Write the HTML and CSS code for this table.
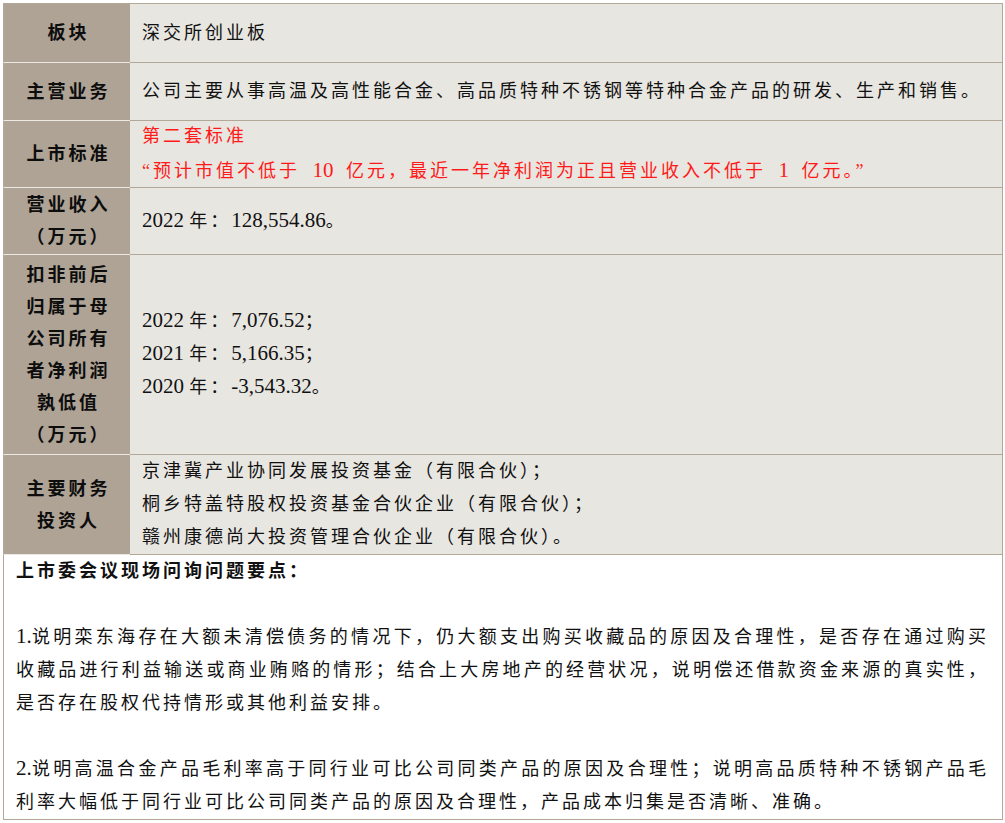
FILE: index.html
```html
<!DOCTYPE html>
<html lang="zh-CN">
<head>
<meta charset="utf-8">
<title>深交所创业板</title>
<link rel="stylesheet" href="styles.css">
</head>
<body>
<div class="sheet">
  <div class="grid">
    <div class="label">板块</div>
    <div class="value">深交所创业板</div>

    <div class="label">主营业务</div>
    <div class="value">公司主要从事高温及高性能合金、高品质特种不锈钢等特种合金产品的研发、生产和销售。</div>

    <div class="label">上市标准</div>
    <div class="value red">
      <div class="line">第二套标准</div>
      <div class="line">“预计市值不低于 <span class="n">10</span> 亿元，最近一年净利润为正且营业收入不低于 <span class="n">1</span> 亿元。”</div>
    </div>

    <div class="label">营业收入<br>（万元）</div>
    <div class="value"><div class="line"><span class="n">2022 </span>年：<span class="n">128,554.86</span>。</div></div>

    <div class="label">扣非前后<br>归属于母<br>公司所有<br>者净利润<br>孰低值<br>（万元）</div>
    <div class="value">
      <div class="line"><span class="n">2022 </span>年：<span class="n">7,076.52</span>；</div>
      <div class="line"><span class="n">2021 </span>年：<span class="n">5,166.35</span>；</div>
      <div class="line"><span class="n">2020 </span>年：<span class="n">-3,543.32</span>。</div>
    </div>

    <div class="label">主要财务<br>投资人</div>
    <div class="value">
      <div class="line">京津冀产业协同发展投资基金（有限合伙）；</div>
      <div class="line">桐乡特盖特股权投资基金合伙企业（有限合伙）；</div>
      <div class="line">赣州康德尚大投资管理合伙企业（有限合伙）。</div>
    </div>
  </div>

  <div class="notes">
    <div class="heading">上市委会议现场问询问题要点：</div>
    <div class="blank"></div>
    <div class="para">
      <span class="ln full"><span class="n">1.</span>说明栾东海存在大额未清偿债务的情况下，仍大额支出购买收藏品的原因及合理性，是否存在通过购买</span>
      <span class="ln full">收藏品进行利益输送或商业贿赂的情形；结合上大房地产的经营状况，说明偿还借款资金来源的真实性，</span>
      <span class="ln">是否存在股权代持情形或其他利益安排。</span>
    </div>
    <div class="blank"></div>
    <div class="para">
      <span class="ln full"><span class="n">2.</span>说明高温合金产品毛利率高于同行业可比公司同类产品的原因及合理性；说明高品质特种不锈钢产品毛</span>
      <span class="ln">利率大幅低于同行业可比公司同类产品的原因及合理性，产品成本归集是否清晰、准确。</span>
    </div>
  </div>
</div>
</body>
</html>
```

FILE: styles.css
```css
html, body {
  margin: 0;
  padding: 0;
  background: #ffffff;
}

body {
  font-family: "Liberation Serif", "Noto Sans CJK SC", serif;
  font-size: 18px;
  letter-spacing: 3px;
  color: #111111;
}

.sheet {
  margin: 3px 0 0 3px;
  width: 1000px;
  box-sizing: border-box;
}

.grid {
  display: grid;
  grid-template-columns: 127px 873px;
  grid-template-rows: 59px 58px 67px 67px 200px 100px;
  border-top: 1px solid #b3a797;
}

.label {
  box-sizing: border-box;
  background: #aea395;
  border-left: 1px solid #b3a797;
  border-bottom: 1px solid #ece9e4;
  display: flex;
  align-items: center;
  justify-content: center;
  text-align: center;
  font-weight: 700;
  line-height: 32px;
  padding-left: 3px;
  color: #0d0d0d;
}

.value {
  box-sizing: border-box;
  background: #e8e6e1;
  border-bottom: 1px solid #b3a797;
  border-right: 1px solid #b3a797;
  display: flex;
  flex-direction: column;
  justify-content: center;
  padding-left: 12px;
  line-height: 33px;
}

.value.red {
  color: #ff1a1a;
  line-height: 35px;
  word-spacing: 5px;
}

.n {
  font-size: 21px;
  letter-spacing: 0;
  line-height: 1;
}

.notes {
  box-sizing: border-box;
  border-left: 1px solid #b3a797;
  border-right: 1px solid #b3a797;
  border-bottom: 1px solid #b3a797;
  padding: 0 13px 0 12px;
  line-height: 33px;
}

.heading {
  font-weight: 700;
  height: 33px;
}

.blank {
  height: 33px;
}

.ln {
  display: block;
  height: 33px;
  white-space: nowrap;
}

.ln.full {
  text-align: justify;
  text-align-last: justify;
  white-space: normal;
}
```
